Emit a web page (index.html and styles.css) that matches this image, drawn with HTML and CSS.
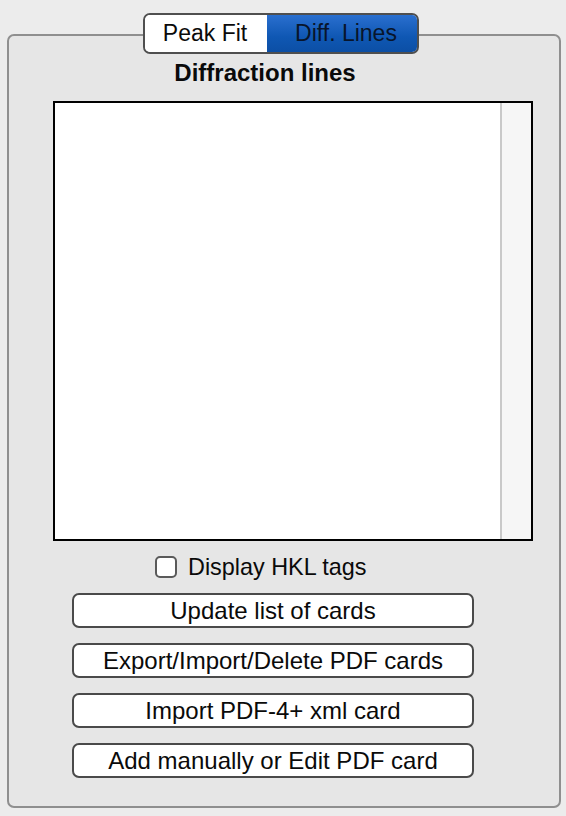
FILE: index.html
```html
<!DOCTYPE html>
<html>
<head>
<meta charset="utf-8">
<link rel="stylesheet" href="styles.css">
</head>
<body>
<div class="window">
  <div class="tabs">
    <div class="tab tab-off">Peak Fit</div>
    <div class="tab tab-on">Diff. Lines</div>
  </div>
  <div class="panel">
    <div class="title">Diffraction lines</div>
    <div class="listbox">
      <div class="list-area"></div>
      <div class="scrollbar"></div>
    </div>
    <label class="check-row">
      <span class="checkbox"></span>
      <span class="check-label">Display HKL tags</span>
    </label>
    <div class="buttons">
      <div class="btn">Update list of cards</div>
      <div class="btn">Export/Import/Delete PDF cards</div>
      <div class="btn">Import PDF-4+ xml card</div>
      <div class="btn">Add manually or Edit PDF card</div>
    </div>
  </div>
</div>
</body>
</html>
```
FILE: styles.css
```css
html, body {
  margin: 0;
  padding: 0;
  background: #ececec;
}
body {
  width: 566px;
  height: 816px;
  overflow: hidden;
  font-family: "Liberation Sans", Arial, sans-serif;
  color: #0a0a0a;
}
.window {
  display: flex;
  flex-direction: column;
  padding-top: 13px;
  padding-left: 7px;
}
.tabs {
  position: relative;
  z-index: 1;
  display: flex;
  margin-left: 136px;
  width: 276px;
  height: 41px;
  box-sizing: border-box;
  border: 2px solid #4f4f4f;
  border-radius: 7px;
  overflow: hidden;
}
.tab {
  display: flex;
  align-items: center;
  justify-content: center;
  font-size: 23px;
  height: 100%;
}
.tab-off {
  width: 122px;
  background: #ffffff;
  padding-right: 2px;
  box-sizing: border-box;
}
.tab-on {
  flex: 1;
  background: linear-gradient(#2a6fcf, #0f57b3 60%, #0c4fa5);
  color: #08152b;
  padding-left: 8px;
  box-sizing: border-box;
}
.panel {
  margin-top: -20px;
  width: 554px;
  height: 774px;
  box-sizing: border-box;
  border: 2px solid #8f8f8f;
  border-radius: 7px;
  background: #e6e6e6;
  display: flex;
  flex-direction: column;
  align-items: flex-start;
}
.title {
  width: 512px;
  margin-top: 23px;
  text-align: center;
  font-weight: bold;
  font-size: 24px;
  line-height: 27px;
}
.listbox {
  margin-top: 15px;
  margin-left: 44px;
  width: 480px;
  height: 440px;
  box-sizing: border-box;
  border: 2px solid #000;
  background: #fff;
  display: flex;
}
.list-area {
  flex: 1;
}
.scrollbar {
  width: 29px;
  border-left: 2px solid #c9c9c9;
  background: #f6f6f6;
}
.check-row {
  margin-top: 13px;
  margin-left: 146px;
  height: 26px;
  display: flex;
  align-items: center;
  gap: 11px;
}
.checkbox {
  width: 22px;
  height: 22px;
  box-sizing: border-box;
  border: 2px solid #5a5a5a;
  border-radius: 5px;
  background: #fff;
}
.check-label {
  font-size: 23.4px;
  line-height: 26px;
}
.buttons {
  margin-top: 13px;
  margin-left: 63px;
  display: flex;
  flex-direction: column;
  gap: 15px;
}
.btn {
  width: 402px;
  height: 35px;
  box-sizing: border-box;
  border: 2px solid #4a4a4a;
  border-radius: 7px;
  background: #fff;
  display: flex;
  align-items: center;
  justify-content: center;
  font-size: 24px;
}
```
